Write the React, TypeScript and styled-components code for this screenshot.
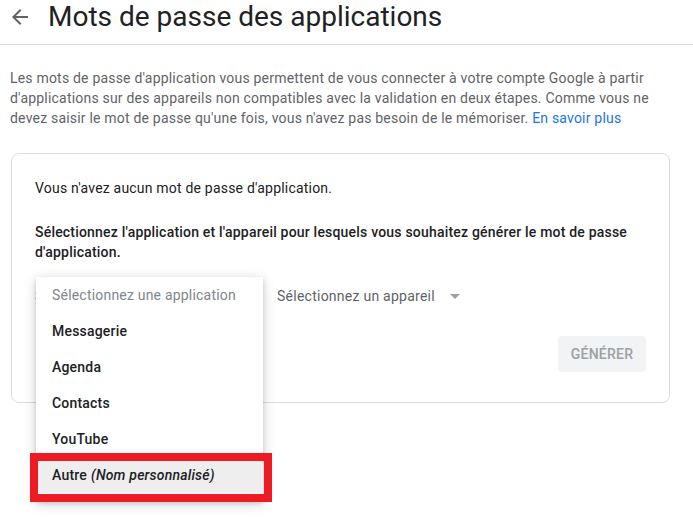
import React from "react";
import styled, { createGlobalStyle } from "styled-components";

const Global = createGlobalStyle`
  html, body { margin: 0; padding: 0; background: #fff; }
  body { font-family: Roboto, "Liberation Sans", Arial, sans-serif; }
  * { box-sizing: border-box; }
`;

const Page = styled.div`
  width: 693px;
  height: 530px;
  overflow: hidden;
  background: #fff;
`;

const Header = styled.header`
  height: 45px;
  display: flex;
  align-items: center;
  gap: 16px;
  padding: 0 0 10px 8px;
  border-bottom: 1px solid #dadce0;
`;

const BackIcon = styled.svg`
  width: 24px;
  height: 24px;
  fill: #5f6368;
  flex: none;
`;

const Title = styled.h1`
  margin: 0;
  font-family: Roboto, "Liberation Sans", sans-serif;
  font-size: 28px;
  font-weight: 400;
  line-height: 34px;
  color: #202124;
`;

const Intro = styled.p`
  margin: 23px 0 0 10px;
  max-width: 662px;
  font-size: 14px;
  line-height: 20px;
  letter-spacing: 0.2px;
  color: #5f6368;
`;

const Link = styled.a`
  color: #1a73e8;
  text-decoration: none;
`;

const Card = styled.section`
  margin: 25px 0 0 11px;
  width: 659px;
  border: 1px solid #dadce0;
  border-radius: 8px;
  padding: 24px 23px 30px 23px;
  display: flex;
  flex-direction: column;
`;

const Text = styled.p<{ $strong?: boolean }>`
  margin: 0;
  font-size: 14px;
  line-height: 20px;
  letter-spacing: 0.2px;
  color: #202124;
  font-weight: ${(p) => (p.$strong ? 500 : 400)};
  & + & {
    margin-top: 24px;
  }
`;

const SelectRow = styled.div`
  margin-top: 16px;
  display: flex;
  align-items: center;
  gap: 16px;
  height: 36px;
`;

const SelectBox = styled.div<{ $width: number }>`
  position: relative;
  width: ${(p) => p.$width}px;
  height: 36px;
  display: flex;
  align-items: center;
  gap: 15px;
  font-size: 14px;
  letter-spacing: 0.25px;
  color: #5f6368;
`;

const Caret = styled.span`
  width: 0;
  height: 0;
  border-left: 5.5px solid transparent;
  border-right: 5.5px solid transparent;
  border-top: 5px solid #9aa0a6;
`;

const Menu = styled.ul`
  position: absolute;
  top: -1px;
  left: 1px;
  width: 227px;
  margin: 0;
  padding: 0 0 8px;
  list-style: none;
  background: #fff;
  box-shadow: 0 2px 4px rgba(0, 0, 0, 0.14), 0 3px 12px rgba(0, 0, 0, 0.18);
  z-index: 2;
`;

const MenuItem = styled.li<{ $placeholder?: boolean; $active?: boolean }>`
  height: 36px;
  display: flex;
  align-items: center;
  padding: 0 16px;
  font-size: 14px;
  letter-spacing: 0.2px;
  font-weight: ${(p) => (p.$placeholder ? 400 : 500)};
  color: ${(p) => (p.$placeholder ? "#80868b" : "#202124")};
  background: ${(p) => (p.$active ? "#eeeeee" : "transparent")};
  white-space: nowrap;
  em {
    margin-left: 4px;
    font-style: italic;
  }
`;

const Highlight = styled.div`
  position: absolute;
  left: -6px;
  top: 176px;
  width: 242px;
  height: 49px;
  border: 8px solid #ed1c24;
  pointer-events: none;
`;

const Actions = styled.div`
  margin-top: 22px;
  display: flex;
  justify-content: flex-end;
`;

const Button = styled.button`
  width: 88px;
  height: 36px;
  border: none;
  border-radius: 4px;
  background: #f1f3f4;
  color: #9aa0a6;
  font-family: Roboto, "Liberation Sans", sans-serif;
  font-size: 14px;
  font-weight: 500;
  letter-spacing: 0.25px;
  cursor: default;
`;

const apps = ["Messagerie", "Agenda", "Contacts", "YouTube"];

export default function App() {
  return (
    <Page>
      <Global />
      <Header>
        <BackIcon viewBox="0 0 24 24">
          <path d="M20 11H7.83l5.59-5.59L12 4l-8 8 8 8 1.41-1.41L7.83 13H20v-2z" />
        </BackIcon>
        <Title>Mots de passe des applications</Title>
      </Header>
      <Intro>
        Les mots de passe d'application vous permettent de vous connecter à votre compte Google à partir
        d'applications sur des appareils non compatibles avec la validation en deux étapes. Comme vous ne
        devez saisir le mot de passe qu'une fois, vous n'avez pas besoin de le mémoriser.{" "}
        <Link href="#">En savoir plus</Link>
      </Intro>
      <Card>
        <Text>Vous n'avez aucun mot de passe d'application.</Text>
        <Text $strong>
          Sélectionnez l'application et l'appareil pour lesquels vous souhaitez générer le mot de passe
          d'application.
        </Text>
        <SelectRow>
          <SelectBox $width={226}>
            Sélectionnez une application
            <Menu>
              <MenuItem $placeholder>Sélectionnez une application</MenuItem>
              {apps.map((a) => (
                <MenuItem key={a}>{a}</MenuItem>
              ))}
              <MenuItem $active>
                Autre<em>(Nom personnalisé)</em>
              </MenuItem>
              <Highlight />
            </Menu>
          </SelectBox>
          <SelectBox $width={200}>
            Sélectionnez un appareil
            <Caret />
          </SelectBox>
        </SelectRow>
        <Actions>
          <Button>GÉNÉRER</Button>
        </Actions>
      </Card>
    </Page>
  );
}
